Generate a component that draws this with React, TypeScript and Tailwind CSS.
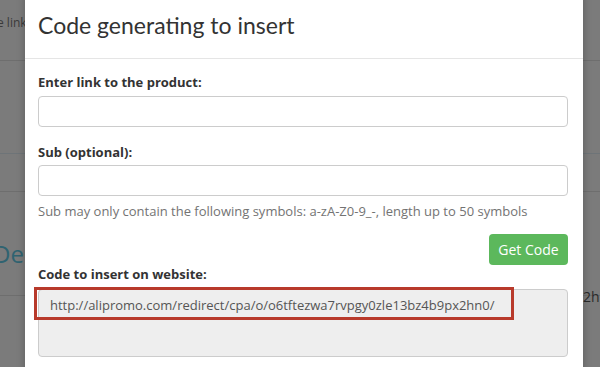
export default function App() {
  return (
    <div
      className="relative w-[600px] h-[367px] overflow-hidden bg-[#7b7b7b]"
      style={{ fontFamily: '"Open Sans", "DejaVu Sans", sans-serif' }}
    >
      {/* Page behind the backdrop */}
      <div className="absolute inset-0 text-[12px] text-[#3a3a3a]">
        <div className="absolute left-0 right-0 top-[60px] h-px bg-[#6e6e6e]" />
        <div className="absolute left-0 right-0 top-[153px] h-px bg-[#6e7478]" />
        <div className="absolute left-0 right-0 top-[191px] h-px bg-[#6e6e6e]" />
        <div className="absolute left-0 right-0 top-[295px] h-px bg-[#6e6e6e]" />
        <div className="absolute left-[-3px] top-[14px]">e link</div>
        <div className="absolute left-[-7px] top-[239px] text-[24px] leading-[30px] text-[#2f6371]">Dee</div>
        <div className="absolute left-[583px] top-[286px] text-[14px] text-[#2a2a2a]">2hn</div>
      </div>

      {/* Modal */}
      <div className="absolute left-[25px] top-[-6px] w-[558px] h-[400px] bg-white shadow-[0_0_8px_rgba(0,0,0,0.25)]">
        <div className="h-[65px] border-b border-[#e5e5e5] px-[13px] pt-[16px]">
          <h4
            className="text-[23px] leading-[30px] text-[#333]"
            style={{ fontFamily: 'Lato, "Open Sans", sans-serif' }}
          >
            Code generating to insert
          </h4>
        </div>
        <div className="flex flex-col px-[13px] pt-[13px] text-[13px] text-[#333]">
          <label className="font-bold leading-[20px]">Enter link to the product:</label>
          <input className="mt-[4px] w-[530px] h-[31px] rounded-[4px] border border-[#ccc] bg-white" />
          <label className="mt-[15px] font-bold leading-[20px]">Sub (optional):</label>
          <input className="mt-[3px] w-[530px] h-[31px] rounded-[4px] border border-[#ccc] bg-white" />
          <p className="mt-[6px] leading-[18px] text-[#737373]">
            Sub may only contain the following symbols: a-zA-Z0-9_-, length up to 50 symbols
          </p>
          <div className="mt-[14px] flex w-[530px] justify-end">
            <button className="h-[31px] w-[79px] rounded-[4px] bg-[#5cb85c] text-[14px] text-white">
              Get Code
            </button>
          </div>
          <label className="mt-[1px] font-bold leading-[16px]">Code to insert on website:</label>
          <div className="relative mt-[7px] h-[68px] w-[530px] rounded-[4px] border border-[#ccc] bg-[#eee] px-[11px] pt-[6px] text-[13px] leading-[18px] text-[#555]">
            http://alipromo.com/redirect/cpa/o/o6tftezwa7rvpgy0zle13bz4b9px2hn0/
            <div className="absolute left-[-5px] top-[-3px] h-[33px] w-[480px] border-[3px] border-[#b83a2b]" />
          </div>
        </div>
      </div>
    </div>
  );
}
